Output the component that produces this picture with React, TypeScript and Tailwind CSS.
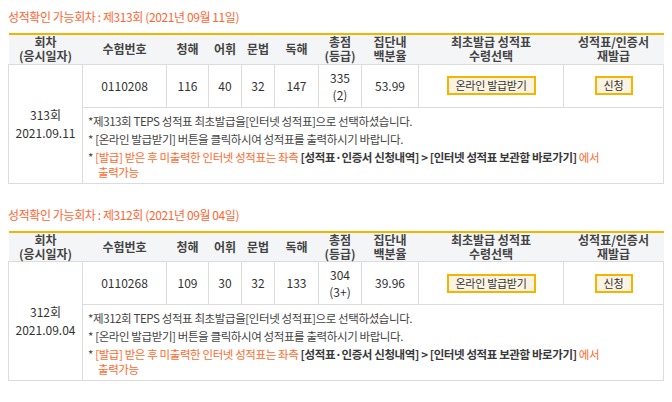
import React from "react";

type Row = {
  title: string;
  round: string;
  date: string;
  no: string;
  l: string;
  v: string;
  g: string;
  r: string;
  total: string;
  grade: string;
  pct: string;
};

const rows: Row[] = [
  {
    title: "성적확인 가능회차 : 제313회 (2021년 09월 11일)",
    round: "313회",
    date: "2021.09.11",
    no: "0110208",
    l: "116",
    v: "40",
    g: "32",
    r: "147",
    total: "335",
    grade: "(2)",
    pct: "53.99",
  },
  {
    title: "성적확인 가능회차 : 제312회 (2021년 09월 04일)",
    round: "312회",
    date: "2021.09.04",
    no: "0110268",
    l: "109",
    v: "30",
    g: "32",
    r: "133",
    total: "304",
    grade: "(3+)",
    pct: "39.96",
  },
];

function Section({ d, first }: { d: Row; first: boolean }) {
  const th =
    "bg-[#f4f5f7] border-b border-[#dcdcdc] font-semibold text-[#444] text-[12px] leading-[14px] text-center align-middle p-0";
  const td =
    "border border-[#dcdcdc] text-center align-middle text-[12px] text-[#333] p-0";
  return (
    <div className={first ? "" : "mt-[22px]"}>
      <div className="h-[18px] leading-[18px] text-[12px] tracking-[-0.4px] text-[#ff6633] mb-[7px]">
        {d.title}
      </div>
      <table className="table-fixed border-collapse w-[655px] border-t-2 border-t-[#f5b400]">
        <colgroup>
          <col className="w-[74px]" />
          <col className="w-[84px]" />
          <col className="w-[42px]" />
          <col className="w-[33px]" />
          <col className="w-[33px]" />
          <col className="w-[44px]" />
          <col className="w-[43px]" />
          <col className="w-[57px]" />
          <col className="w-[145px]" />
          <col className="w-[100px]" />
        </colgroup>
        <thead>
          <tr className="h-[30px]">
            <th className={th}>
              회차
              <br />
              (응시일자)
            </th>
            <th className={th}>수험번호</th>
            <th className={th}>청해</th>
            <th className={th}>어휘</th>
            <th className={th}>문법</th>
            <th className={th}>독해</th>
            <th className={th}>
              총점
              <br />
              (등급)
            </th>
            <th className={th}>
              집단내
              <br />
              백분율
            </th>
            <th className={th}>
              최초발급 성적표
              <br />
              수령선택
            </th>
            <th className={th}>
              성적표/인증서
              <br />
              재발급
            </th>
          </tr>
        </thead>
        <tbody>
          <tr className="h-[43px]">
            <td rowSpan={2} className={td + " leading-[18px]"}>
              {d.round}
              <br />
              {d.date}
            </td>
            <td className={td}>{d.no}</td>
            <td className={td}>{d.l}</td>
            <td className={td}>{d.v}</td>
            <td className={td}>{d.g}</td>
            <td className={td}>{d.r}</td>
            <td className={td + " leading-[17px]"}>
              {d.total}
              <br />
              {d.grade}
            </td>
            <td className={td}>{d.pct}</td>
            <td className={td}>
              <div className="flex justify-center">
                <button className="h-[19px] w-[89px] border-2 border-[#f5b400] bg-[#fbf3e3] text-[11px] leading-[15px] tracking-[-0.3px] text-[#333] p-0">
                  온라인 발급받기
                </button>
              </div>
            </td>
            <td className={td}>
              <div className="flex justify-center">
                <button className="h-[19px] w-[38px] border-2 border-[#f5b400] bg-[#fbf3e3] text-[11px] leading-[15px] text-[#333] p-0">
                  신청
                </button>
              </div>
            </td>
          </tr>
          <tr>
            <td
              colSpan={9}
              className="border border-[#dcdcdc] align-top text-left pl-[5px] pr-[4px] pt-[6px] pb-[3px] text-[11.5px] tracking-[-0.4px] leading-[15px] text-[#444]"
            >
              <div>*제{d.round.replace("회", "")}회 TEPS 성적표 최초발급을[인터넷 성적표]으로 선택하셨습니다.</div>
              <div className="mt-[3px]">* [온라인 발급받기] 버튼을 클릭하시여 성적표를 출력하시기 바랍니다.</div>
              <div className="mt-[3px] pl-[10px] indent-[-10px]">
                * <span className="text-[#ff6a2d]">[발급] 받은 후 미출력한 인터넷 성적표는 좌측 </span>
                <span className="font-semibold text-[#3a3a3a]">[성적표·인증서 신청내역] &gt; [인터넷 성적표 보관함 바로가기]</span>
                <span className="text-[#ff6a2d]"> 에서</span>
                <br />
                <span className="text-[#ff6a2d]">출력가능</span>
              </div>
            </td>
          </tr>
        </tbody>
      </table>
    </div>
  );
}

export default function App() {
  return (
    <div className="w-[672px] h-[402px] bg-white pl-[8px] pt-[8px] font-['Noto_Sans_CJK_KR',sans-serif]">
      {rows.map((d, i) => (
        <Section key={i} d={d} first={i === 0} />
      ))}
    </div>
  );
}
